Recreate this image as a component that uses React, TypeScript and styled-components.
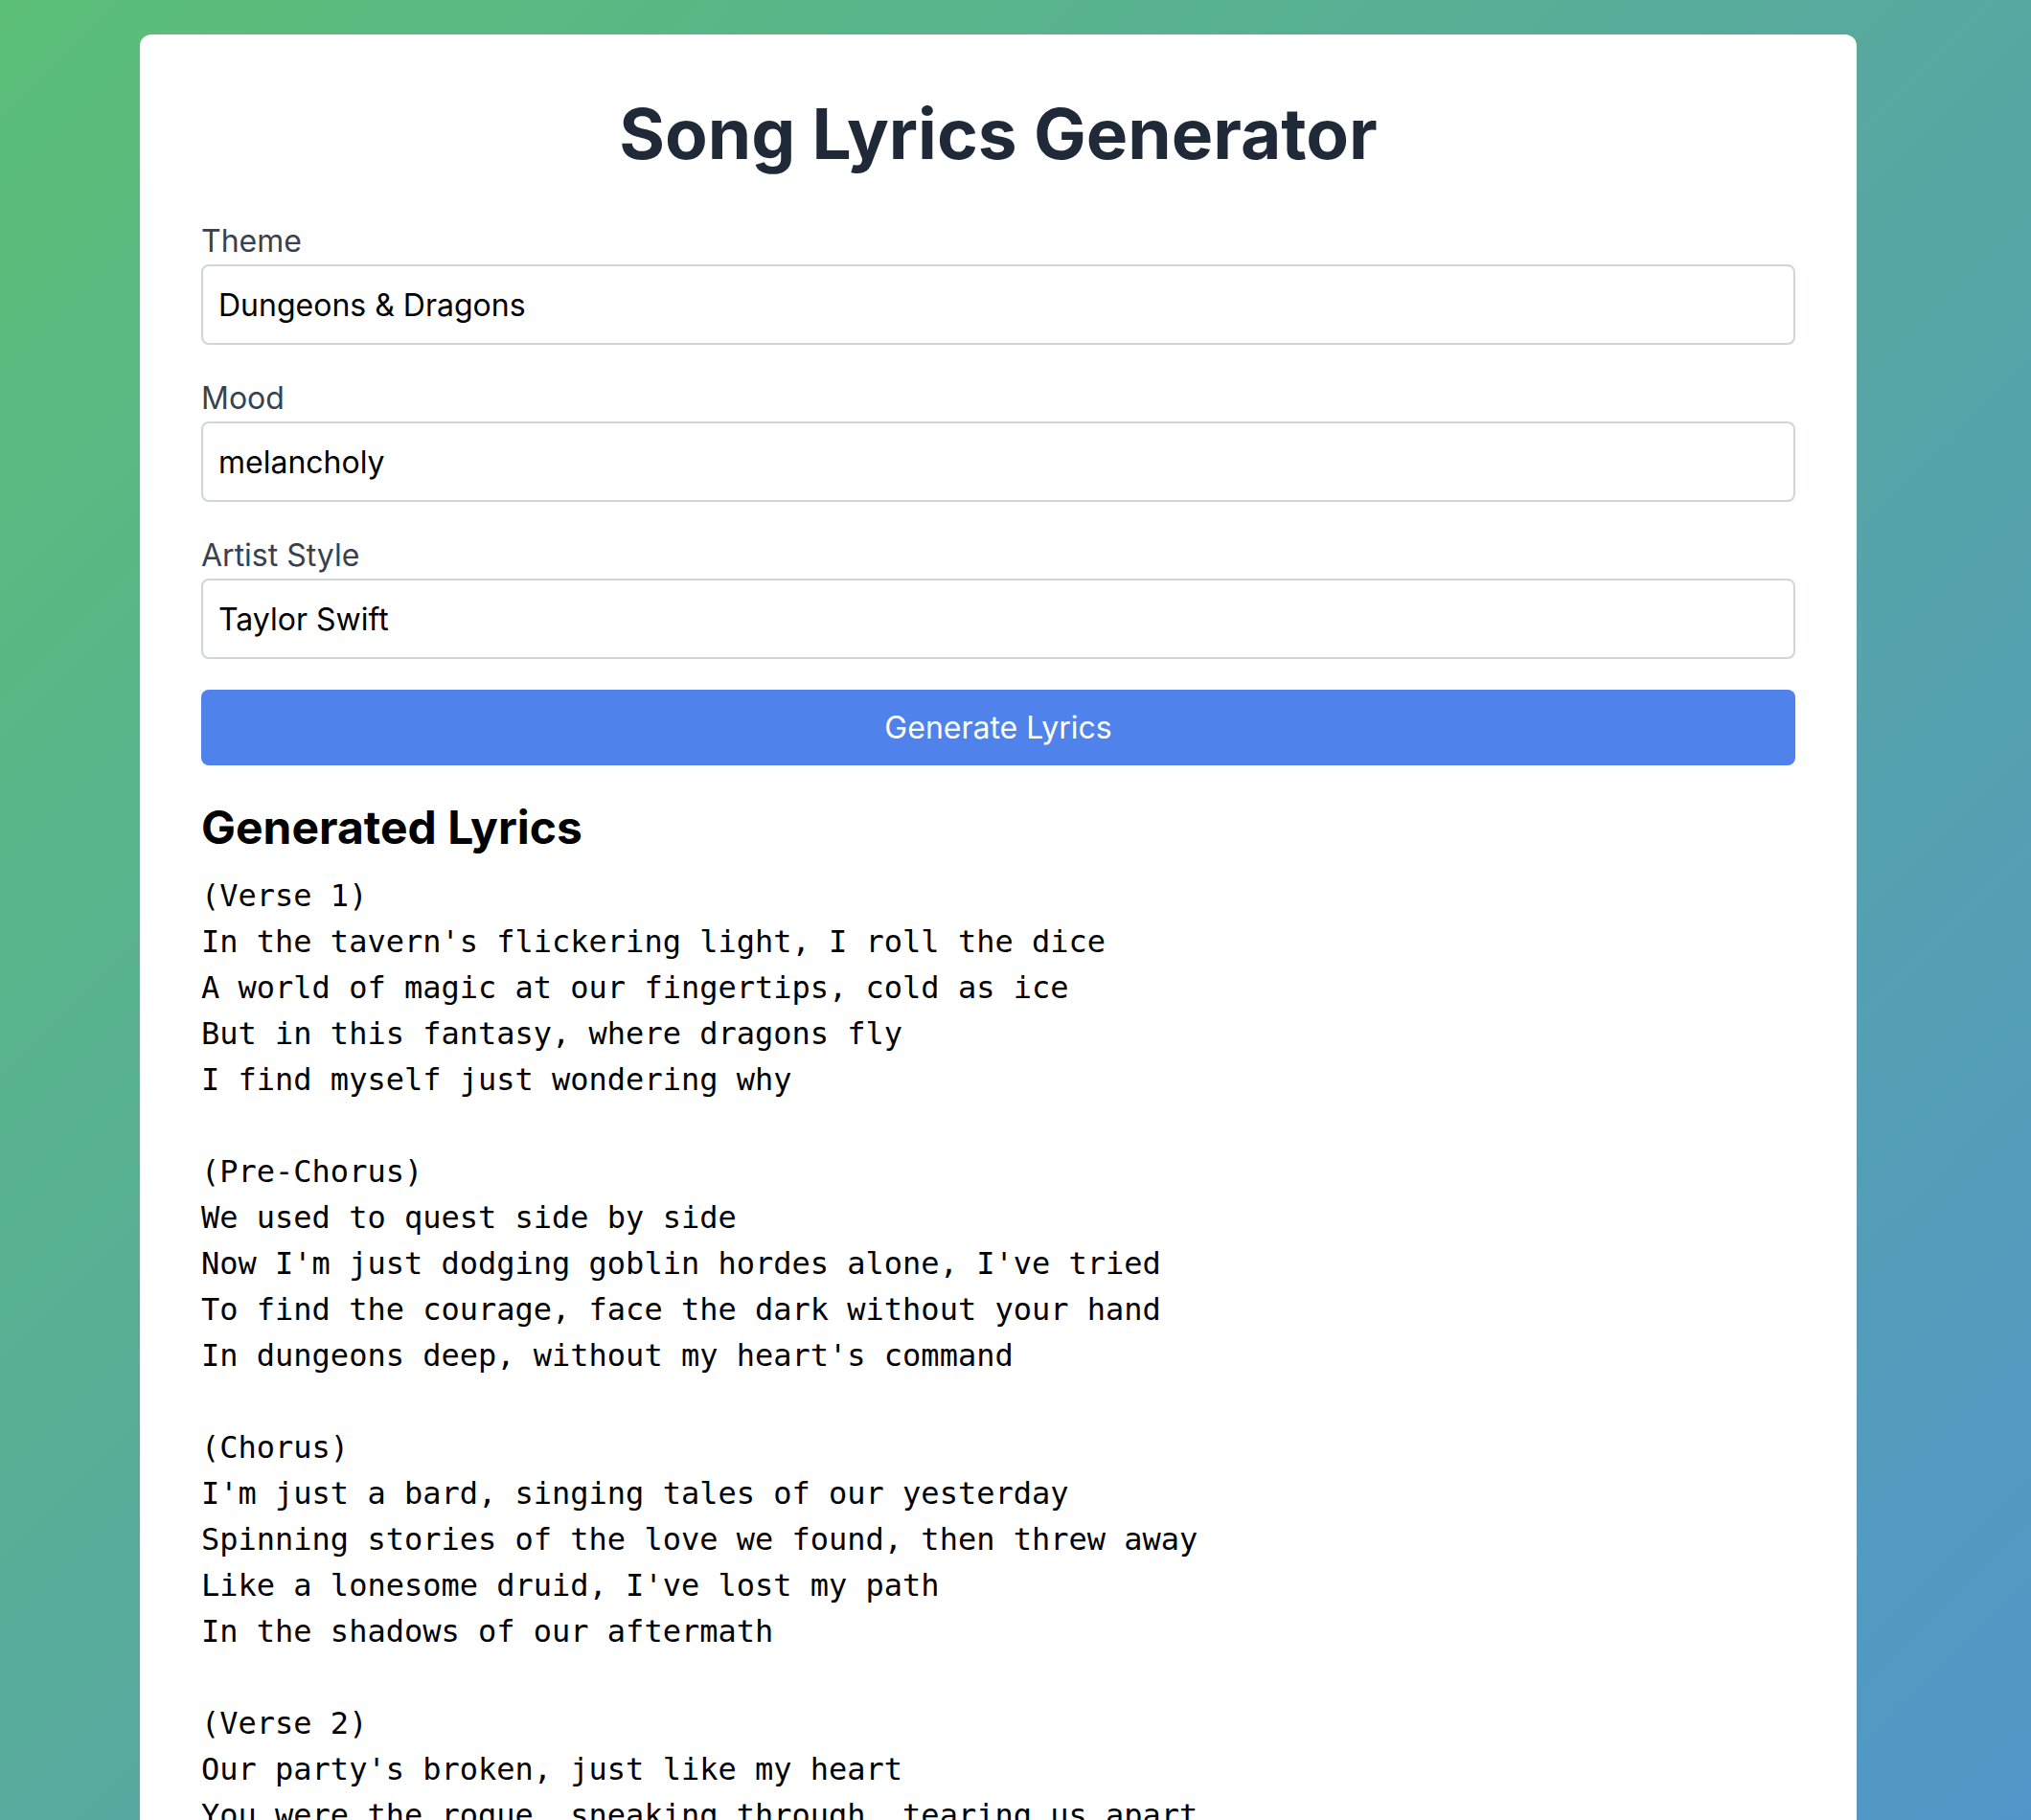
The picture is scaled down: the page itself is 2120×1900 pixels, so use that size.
import React from "react";
import styled, { createGlobalStyle } from "styled-components";

const GlobalStyle = createGlobalStyle`
  html, body {
    margin: 0;
    padding: 0;
  }
  body {
    font-family: Inter, "Noto Sans", "Liberation Sans", sans-serif;
    background: linear-gradient(135deg, #5cbf77 0%, #57a99f 50%, #5196c9 100%) fixed;
    min-height: 100vh;
  }
  * { box-sizing: border-box; }
`;

const Page = styled.div`
  min-height: 100vh;
  padding: 36px 0 0 146px;
`;

const Card = styled.main`
  width: 1792px;
  background: #ffffff;
  border-radius: 12px;
  padding: 64px 64px 64px;
  display: flex;
  flex-direction: column;
`;

const Title = styled.h1`
  margin: 0 0 48px;
  font-size: 73px;
  line-height: 80px;
  font-weight: 700;
  color: #1f2937;
  text-align: center;
`;

const Field = styled.div`
  display: flex;
  flex-direction: column;
  margin-bottom: 32px;
`;

const Label = styled.label`
  font-size: 32px;
  line-height: 48px;
  color: #374151;
`;

const Input = styled.input`
  height: 84px;
  width: 100%;
  border: 2px solid #d1d5db;
  border-radius: 8px;
  padding: 0 16px;
  font-family: Inter, "Noto Sans", "Liberation Sans", sans-serif;
  font-size: 32px;
  line-height: 48px;
  color: #000000;
  background: #ffffff;
  outline: none;
`;

const Button = styled.button`
  height: 79px;
  width: 100%;
  border: none;
  border-radius: 8px;
  background: #5082ec;
  color: #ffffff;
  font-family: Inter, "Noto Sans", "Liberation Sans", sans-serif;
  font-size: 32px;
  line-height: 48px;
  cursor: pointer;
`;

const ResultTitle = styled.h2`
  margin: 33px 0 15px;
  font-size: 48px;
  line-height: 64px;
  font-weight: 700;
  color: #000000;
`;

const Lyrics = styled.pre`
  margin: 0;
  font-family: "DejaVu Sans Mono", "Liberation Mono", monospace;
  font-size: 32px;
  line-height: 48px;
  color: #000000;
  white-space: pre-wrap;
`;

const lyrics = `(Verse 1)
In the tavern's flickering light, I roll the dice
A world of magic at our fingertips, cold as ice
But in this fantasy, where dragons fly
I find myself just wondering why

(Pre-Chorus)
We used to quest side by side
Now I'm just dodging goblin hordes alone, I've tried
To find the courage, face the dark without your hand
In dungeons deep, without my heart's command

(Chorus)
I'm just a bard, singing tales of our yesterday
Spinning stories of the love we found, then threw away
Like a lonesome druid, I've lost my path
In the shadows of our aftermath

(Verse 2)
Our party's broken, just like my heart
You were the rogue, sneaking through, tearing us apart`;

const fields = [
  { id: "theme", label: "Theme", value: "Dungeons & Dragons" },
  { id: "mood", label: "Mood", value: "melancholy" },
  { id: "artist", label: "Artist Style", value: "Taylor Swift" },
];

export default function App() {
  return (
    <>
      <GlobalStyle />
      <Page>
        <Card>
          <Title>Song Lyrics Generator</Title>
          {fields.map((f) => (
            <Field key={f.id}>
              <Label htmlFor={f.id}>{f.label}</Label>
              <Input id={f.id} defaultValue={f.value} />
            </Field>
          ))}
          <Button type="button">Generate Lyrics</Button>
          <ResultTitle>Generated Lyrics</ResultTitle>
          <Lyrics>{lyrics}</Lyrics>
        </Card>
      </Page>
    </>
  );
}
